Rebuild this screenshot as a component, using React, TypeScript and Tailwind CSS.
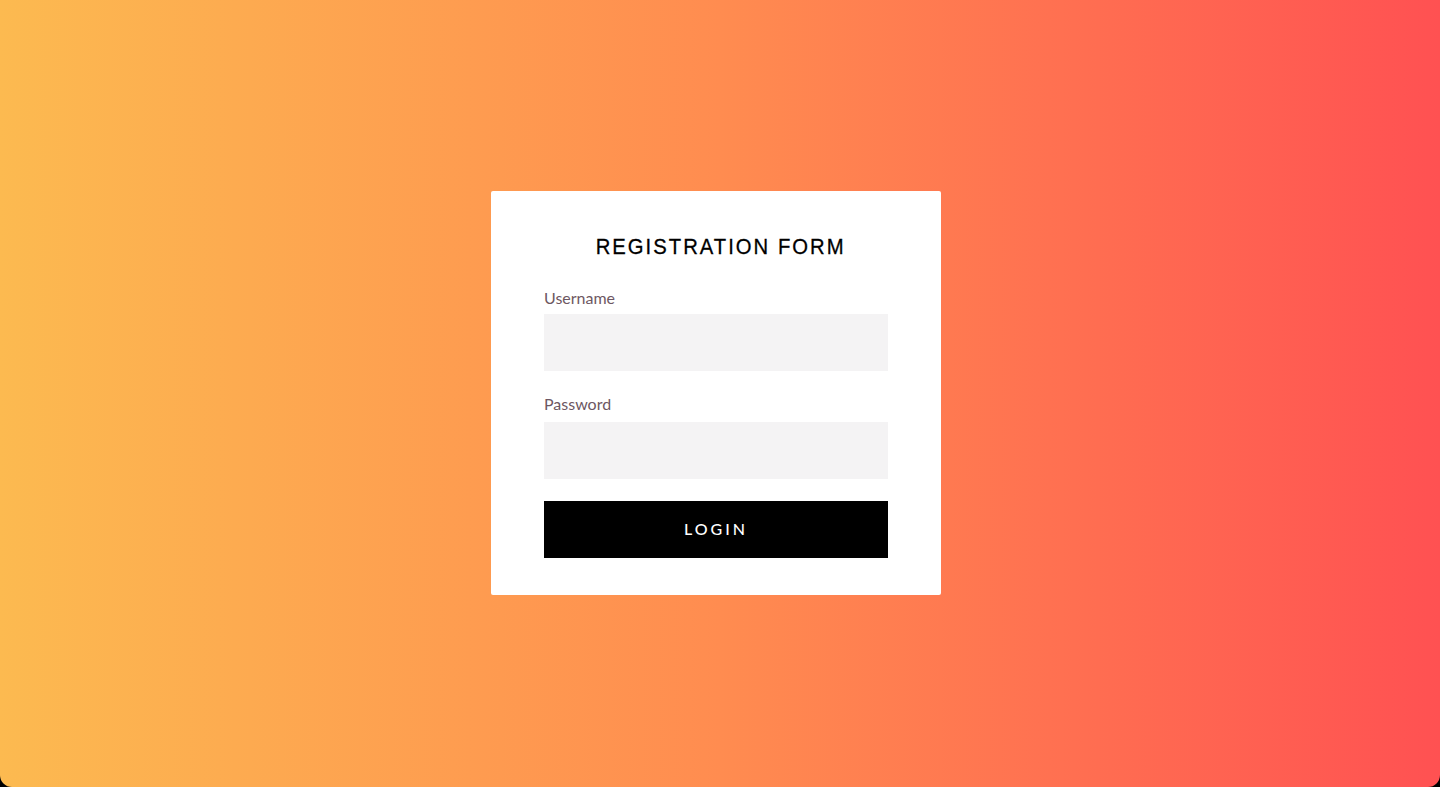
import React from "react";

export default function App() {
  return (
    <div className="w-[1440px] h-[787px] bg-black">
      <div className="w-full h-full rounded-b-[12px] bg-[linear-gradient(90deg,#fcba50_0%,#ff8c50_50%,#ff5152_100%)] flex items-center justify-center pr-[8px] pb-[2px]">
        <div className="w-[450px] h-[404px] bg-white rounded-[2px] px-[53px] pt-[42px] flex flex-col">
          <h1 className="pl-[10px] text-center text-[22px] leading-[28px] tracking-[2.2px] text-black font-['Liberation_Sans',sans-serif] font-normal scale-x-[0.92] [-webkit-text-stroke:0.3px_black]">
            REGISTRATION FORM
          </h1>
          <label className="mt-[27px] text-[16px] leading-[20px] text-[#6d5762] font-['Lato',sans-serif]">
            Username
          </label>
          <input type="text" className="mt-[6px] h-[57px] w-full bg-[#f4f3f4] outline-none" />
          <label className="mt-[23px] text-[16px] leading-[20px] text-[#6d5762] font-['Lato',sans-serif]">
            Password
          </label>
          <input type="password" className="mt-[8px] h-[57px] w-full bg-[#f4f3f4] outline-none" />
          <button className="mt-[22px] h-[57px] w-full bg-black text-white text-[16px] tracking-[3px] font-['Lato',sans-serif] font-medium">
            LOGIN
          </button>
        </div>
      </div>
    </div>
  );
}
